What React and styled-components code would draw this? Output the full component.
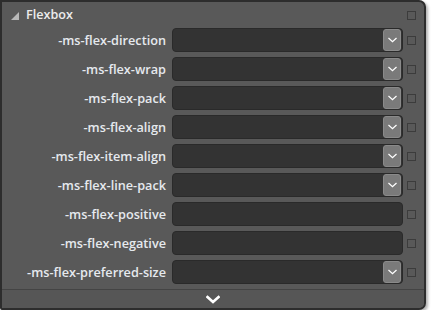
import React from "react";
import styled, { createGlobalStyle } from "styled-components";

const Global = createGlobalStyle`
  html, body { margin: 0; padding: 0; background: #ffffff; }
  body { font-family: "Open Sans", "Noto Sans", sans-serif; }
`;

const Panel = styled.div`
  box-sizing: border-box;
  width: 426px;
  height: 310px;
  background: #595959;
  border: 2px solid #2d2d2d;
  border-radius: 0 7px 7px 2px;
  box-shadow: 2px 2px 3px rgba(0, 0, 0, 0.3);
  display: flex;
  flex-direction: column;
  overflow: hidden;
`;

const Header = styled.div`
  height: 26px;
  display: flex;
  align-items: center;
  padding: 0 8px 0 9px;
  gap: 7px;
`;

const Title = styled.span`
  flex: 1;
  color: #ececec;
  font-size: 12.6px;
  font-weight: 600;
  margin-top: -2px;
`;

const Triangle = styled.svg`
  width: 8px;
  height: 8px;
  flex: none;
  margin-top: 1px;
`;

const Check = styled.span`
  box-sizing: border-box;
  width: 9px;
  height: 9px;
  border: 1px solid #3c3c3c;
  background: #595959;
  flex: none;
`;

const Body = styled.div`
  display: grid;
  grid-template-columns: 166px 1fr 9px;
  column-gap: 4px;
  row-gap: 5px;
  align-items: center;
  padding: 0 8px 5px 0;
`;

const Label = styled.span`
  text-align: right;
  color: #e6e9ee;
  font-size: 12.7px;
  font-weight: 600;
  white-space: nowrap;
  line-height: 24px;
  padding-right: 2px;
`;

const Field = styled.div`
  box-sizing: border-box;
  height: 24px;
  background: #333333;
  border: 1px solid #2a2a2a;
  border-radius: 4px;
  display: flex;
  justify-content: flex-end;
  align-items: stretch;
  padding: 0 1px 0 0;
`;

const DropButton = styled.div`
  box-sizing: border-box;
  width: 18px;
  background: #7a7a7a;
  border: 1px solid #8a8a8a;
  border-radius: 3px;
  display: flex;
  align-items: center;
  justify-content: center;
`;

const Footer = styled.div`
  flex: 1;
  border-top: 1px solid #444444;
  background: #565656;
  display: flex;
  align-items: center;
  justify-content: center;
`;

const Chevron = ({ w, h, sw }) => (
  <svg width={w} height={h} viewBox="0 0 14 8">
    <polyline
      points="1.5,1.5 7,6.5 12.5,1.5"
      fill="none"
      stroke="#ffffff"
      strokeWidth={sw}
      strokeLinecap="square"
    />
  </svg>
);

const rows = [
  ["-ms-flex-direction", true],
  ["-ms-flex-wrap", true],
  ["-ms-flex-pack", true],
  ["-ms-flex-align", true],
  ["-ms-flex-item-align", true],
  ["-ms-flex-line-pack", true],
  ["-ms-flex-positive", false],
  ["-ms-flex-negative", false],
  ["-ms-flex-preferred-size", true],
];

export default function App() {
  return (
    <>
      <Global />
      <Panel>
        <Header>
          <Triangle viewBox="0 0 8 8">
            <polygon points="8,0 8,8 0,8" fill="#b8b8b8" />
          </Triangle>
          <Title>Flexbox</Title>
          <Check />
        </Header>
        <Body>
          {rows.map(([name, drop]) => (
            <React.Fragment key={name}>
              <Label>{name}</Label>
              <Field>
                {drop && (
                  <DropButton>
                    <Chevron w={9} h={6} sw={2} />
                  </DropButton>
                )}
              </Field>
              <Check />
            </React.Fragment>
          ))}
        </Body>
        <Footer>
          <Chevron w={14} h={9} sw={2.6} />
        </Footer>
      </Panel>
    </>
  );
}
